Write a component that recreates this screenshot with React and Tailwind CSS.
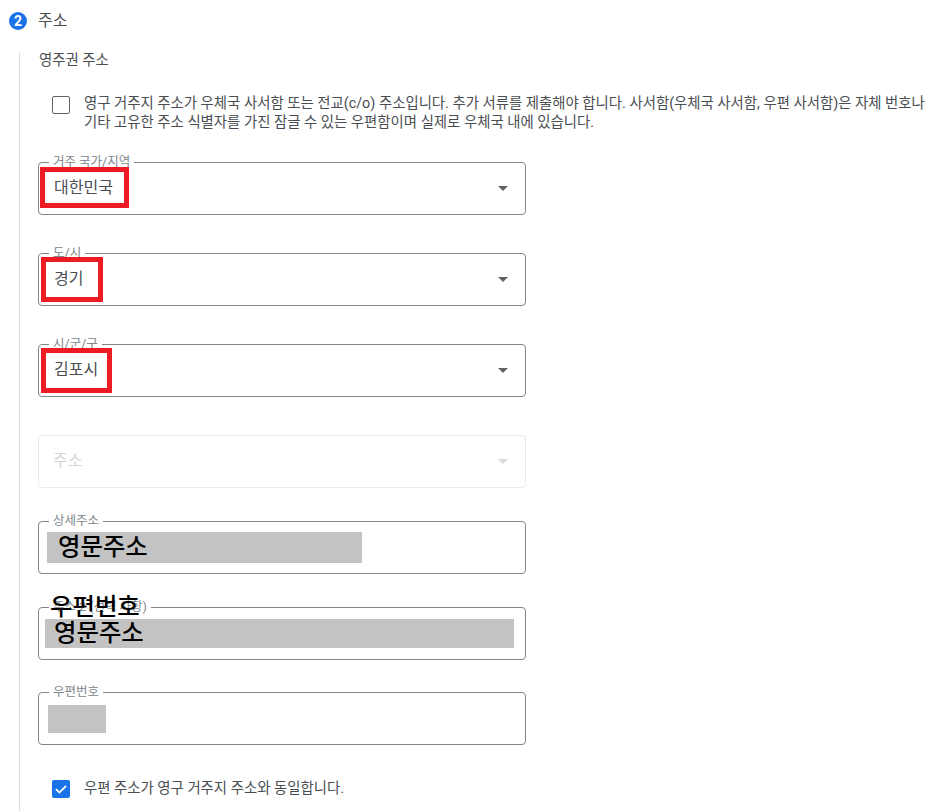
const Caret = ({ muted }) => (
  <svg width="10" height="5" viewBox="0 0 10 5" className={`ml-auto mr-[17px] shrink-0 ${muted ? "text-[#d9d9d9]" : "text-[#5f6368]"}`}>
    <path d="M0 0h10L5 5z" fill="currentColor" />
  </svg>
);

const Field = ({ label, value, select, disabled, className = "", children }) => (
  <div className={`relative flex h-[53px] w-[488px] items-center rounded border ${disabled ? "border-[#e8eaed]" : "border-[#80868b]"} ${className}`}>
    {label && (
      <span className="absolute left-[10px] top-[-9px] bg-white px-1 text-[12.5px] leading-4 text-[#80868b]">{label}</span>
    )}
    {value && (
      <span className={`pb-[2px] text-[16px] leading-6 ${disabled ? "pl-[14px] text-[#d2d4d6]" : "pl-[15px] text-[#4a4e52]"}`}>{value}</span>
    )}
    {select && <Caret muted={disabled} />}
    {children}
  </div>
);

const RedBox = ({ className }) => <div className={`absolute border-[5px] border-[#ed1c24] ${className}`} />;
const GrayBox = ({ className, children }) => (
  <div className={`flex items-center bg-[#c3c3c3] text-[24.4px] font-medium leading-none text-black ${className}`}>{children}</div>
);

export default function App() {
  return (
    <div className="h-[811px] w-[937px] overflow-hidden bg-white font-['Roboto','Noto_Sans_CJK_KR',sans-serif] text-[#4a4e52]">
      <div className="flex items-center gap-[11px] pl-[9px] pt-[12px]">
        <span className="flex h-[18px] w-[18px] items-center justify-center rounded-full bg-[#1a73e8] text-[14px] font-bold leading-none text-white">2</span>
        <span className="text-[16px] leading-[18px]">주소</span>
      </div>
      <div className="ml-[19px] mt-[23px] h-[758px] border-l border-[#dadce0] pl-[18px]">
        <p className="pl-[1px] text-[14.4px] leading-[16px]">영주권 주소</p>
        <div className="mt-[19px] flex gap-[14px] pl-[14px]">
          <span className="mt-[8px] h-[18px] w-[18px] shrink-0 rounded-[2px] border-[1.5px] border-[#5f6368]" />
          <p className="mt-[6px] w-[850px] text-[14.4px] leading-[19px]">
            영구 거주지 주소가 우체국 사서함 또는 전교(c/o) 주소입니다. 추가 서류를 제출해야 합니다. 사서함(우체국 사서함, 우편 사서함)은 자체 번호나 기타 고유한 주소 식별자를 가진 잠글 수 있는 우편함이며 실제로 우체국 내에 있습니다.
          </p>
        </div>

        <Field label="거주 국가/지역" value="대한민국" select className="mt-[30px]">
          <RedBox className="left-[1px] top-[4px] h-[41px] w-[89px]" />
        </Field>
        <Field label="도/시" value="경기" select className="mt-[38px]">
          <RedBox className="left-[2px] top-[3px] h-[45px] w-[62px]" />
        </Field>
        <Field label="시/군/구" value="김포시" select className="mt-[38px]">
          <RedBox className="left-[2px] top-[3px] h-[45px] w-[71px]" />
        </Field>
        <Field value="주소" select disabled className="mt-[38px]" />
        <Field label="상세주소" className="mt-[33px] pl-[8px]">
          <GrayBox className="h-[31px] w-[315px] pl-[11px]">영문주소</GrayBox>
        </Field>
        <Field label="주소 2 (선택 사항)" className="mt-[33px] pl-[6px]">
          <GrayBox className="h-[29px] w-[469px] pl-[9px]">영문주소</GrayBox>
          <span className="absolute left-[11px] top-[-15px] text-[24.4px] font-medium leading-7 text-black">우편번호</span>
        </Field>
        <Field label="우편번호" className="mt-[32px] pl-[9px]">
          <GrayBox className="h-[28px] w-[58px]" />
        </Field>

        <div className="mt-[34px] flex items-center gap-[14px] pl-[14px]">
          <span className="flex h-[18px] w-[18px] shrink-0 items-center justify-center rounded-[2px] bg-[#1a73e8]">
            <svg width="14" height="14" viewBox="0 0 14 14" fill="none" stroke="white" strokeWidth="1.8">
              <path d="M2 7.2l3.4 3.4L12 4" />
            </svg>
          </span>
          <p className="text-[14.4px] leading-[19px]">우편 주소가 영구 거주지 주소와 동일합니다.</p>
        </div>
      </div>
    </div>
  );
}
